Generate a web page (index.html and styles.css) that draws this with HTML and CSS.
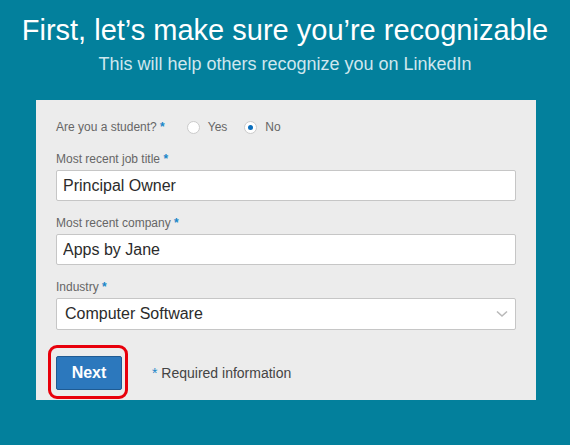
FILE: index.html
```html
<!DOCTYPE html>
<html lang="en">
<head>
<meta charset="utf-8">
<title>LinkedIn - Profile</title>
<link rel="stylesheet" href="styles.css">
</head>
<body>
<header class="header">
  <h1 class="title">First, let’s make sure you’re recognizable</h1>
  <p class="subtitle">This will help others recognize you on LinkedIn</p>
</header>
<main class="panel">
  <div class="student-row">
    <span class="label-text">Are you a student? <span class="req">*</span></span>
    <span class="radio-group">
      <span class="radio-option"><span class="radio"></span><span class="radio-text">Yes</span></span>
      <span class="radio-option"><span class="radio checked"></span><span class="radio-text">No</span></span>
    </span>
  </div>
  <div class="fields">
    <div class="field">
      <label class="field-label">Most recent job title <span class="req">*</span></label>
      <input class="text-input" type="text" value="Principal Owner">
    </div>
    <div class="field">
      <label class="field-label">Most recent company <span class="req">*</span></label>
      <input class="text-input" type="text" value="Apps by Jane">
    </div>
    <div class="field">
      <label class="field-label">Industry <span class="req">*</span></label>
      <div class="select">
        <span class="select-value">Computer Software</span>
        <svg class="chevron" width="12" height="8" viewBox="0 0 12 8"><path d="M1 1.5 L6 6 L11 1.5" fill="none" stroke="#b9b9b9" stroke-width="1.6"/></svg>
      </div>
    </div>
  </div>
  <div class="actions">
    <span class="next-wrap"><button class="next-btn" type="button">Next</button></span>
    <span class="required-note"><span class="req">*</span> Required information</span>
  </div>
</main>
</body>
</html>
```
FILE: styles.css
```css
html, body {
  margin: 0;
  padding: 0;
}
body {
  background: #03809c;
  font-family: "Liberation Sans", Arial, Helvetica, sans-serif;
  height: 445px;
  overflow: hidden;
}
.header {
  text-align: center;
  padding-top: 14px;
}
.title {
  margin: 0;
  font-size: 29px;
  line-height: 33px;
  font-weight: normal;
  color: #ffffff;
}
.subtitle {
  margin: 7px 0 0;
  font-size: 18px;
  line-height: 21px;
  color: #cfe7ee;
}
.panel {
  display: block;
  margin: 25px 0 0 36px;
  width: 500px;
  height: 300px;
  box-sizing: border-box;
  padding: 18px 20px 0;
  background: #ececec;
}
.student-row {
  display: flex;
  align-items: center;
  height: 18px;
  font-size: 12px;
  color: #666666;
}
.req {
  color: #1a86c8;
  font-weight: bold;
}
.radio-group {
  display: flex;
  align-items: center;
  margin-left: 22px;
  gap: 17px;
}
.radio-option {
  display: flex;
  align-items: center;
  gap: 8px;
}
.radio {
  width: 13px;
  height: 13px;
  box-sizing: border-box;
  border: 1px solid #cbcbcb;
  border-radius: 50%;
  background: #ffffff;
  display: flex;
  align-items: center;
  justify-content: center;
}
.radio.checked::before {
  content: "";
  width: 5px;
  height: 5px;
  border-radius: 50%;
  background: #0b6fbd;
}
.radio-text {
  font-size: 12px;
  color: #666666;
}
.fields {
  display: flex;
  flex-direction: column;
  gap: 15px;
  margin-top: 16px;
}
.field {
  display: flex;
  flex-direction: column;
}
.field-label {
  font-size: 12px;
  line-height: 15px;
  color: #666666;
  margin-bottom: 3px;
}
.text-input {
  box-sizing: border-box;
  width: 460px;
  height: 31px;
  margin: 0;
  border: 1px solid #c6c6c6;
  border-radius: 2px;
  padding: 0 6px;
  background: #ffffff;
  font-family: "Liberation Sans", Arial, Helvetica, sans-serif;
  font-size: 16px;
  color: #2b2b2b;
  outline: none;
}
.select {
  box-sizing: border-box;
  width: 460px;
  height: 32px;
  border: 1px solid #c6c6c6;
  border-radius: 2px;
  background: #ffffff;
  display: flex;
  align-items: center;
  justify-content: space-between;
  padding: 0 7px 0 8px;
  font-size: 16px;
  color: #2b2b2b;
}
.chevron {
  display: block;
}
.actions {
  display: flex;
  align-items: center;
  margin-top: 26px;
}
.next-wrap {
  position: relative;
  display: block;
}
.next-wrap::after {
  content: "";
  position: absolute;
  top: -11px;
  left: -8px;
  right: -6px;
  bottom: -9px;
  border: 3px solid #e8000b;
  border-radius: 9px;
}
.next-btn {
  display: block;
  box-sizing: border-box;
  width: 66px;
  height: 34px;
  margin: 0;
  padding: 0;
  border: 1px solid #1f5b93;
  border-radius: 2px;
  background: #2c78bd;
  color: #ffffff;
  font-family: "Liberation Sans", Arial, Helvetica, sans-serif;
  font-size: 16px;
  font-weight: bold;
}
.required-note {
  margin-left: 30px;
  font-size: 14px;
  line-height: 16px;
  color: #444444;
}
.required-note .req {
  font-weight: normal;
}
```
